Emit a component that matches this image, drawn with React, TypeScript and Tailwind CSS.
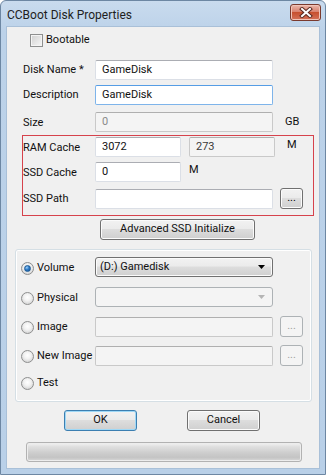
import React from "react";

const btnBg =
  "bg-[linear-gradient(to_bottom,#f2f2f2_0%,#ebebeb_45%,#dddddd_50%,#cfcfcf_100%)]";

function TextBox({
  value = "",
  w,
  disabled = false,
  focus = false,
  grayText = false,
}: {
  value?: string;
  w: string;
  disabled?: boolean;
  focus?: boolean;
  grayText?: boolean;
}) {
  const border = focus
    ? "border-[#7eb4ea] border-t-[#569de5]"
    : disabled
    ? "border-[#c9c9c9] border-t-[#afafaf]"
    : "border-[#dbdfe6] border-t-[#abadb3]";
  const bg = disabled ? "bg-[#f4f4f4]" : "bg-white";
  const color = grayText ? "text-[#8a8a8a]" : disabled ? "text-[#3a3a3a]" : "text-[#111]";
  return (
    <div className={`${w} h-[20px] shrink-0 rounded-[2px] border ${border} ${bg} ${color} flex items-center px-[6px]`}>
      {value}
    </div>
  );
}

function Button({
  label,
  w,
  h = "h-[21px]",
  primary = false,
}: {
  label: string;
  w: string;
  h?: string;
  primary?: boolean;
}) {
  return (
    <div
      className={`${w} ${h} shrink-0 rounded-[3px] border ${
        primary
          ? "border-[#3c7fb1] shadow-[inset_0_0_0_1px_#9fd8f6]"
          : "border-[#707070] shadow-[inset_0_0_0_1px_#fbfbfb]"
      } ${btnBg} flex items-center justify-center text-[#111]`}
    >
      {label}
    </div>
  );
}

function DotsButton({ disabled = false }: { disabled?: boolean }) {
  return (
    <div
      className={`w-[23px] h-[21px] shrink-0 rounded-[3px] border flex items-center justify-center pb-[3px] leading-none ${
        disabled
          ? "border-[#adb2b5] bg-[#f4f4f4] text-[#a0a0a0]"
          : `border-[#707070] ${btnBg} shadow-[inset_0_0_0_1px_#fbfbfb] text-black`
      }`}
    >
      ...
    </div>
  );
}

function Radio({ checked = false }: { checked?: boolean }) {
  return (
    <div className="w-[13px] h-[13px] shrink-0 rounded-full border border-[#8e8f8f] bg-[radial-gradient(circle_at_50%_40%,#ffffff_0%,#f2f2f2_40%,#c6c6c6_100%)] flex items-center justify-center">
      {checked && (
        <div className="w-[7px] h-[7px] rounded-full bg-[radial-gradient(circle_at_35%_30%,#9fd2fa_0%,#2f7cc9_45%,#134f8c_100%)] border border-[#1c5a95]" />
      )}
    </div>
  );
}

function Select({ value = "", disabled = false }: { value?: string; disabled?: boolean }) {
  return (
    <div
      className={`w-[178px] h-[20px] shrink-0 rounded-[3px] border flex items-center justify-between pl-[4px] pr-[7px] ${
        disabled
          ? "border-[#adb2b5] bg-[#f4f4f4]"
          : `border-[#707070] ${btnBg} shadow-[inset_0_0_0_1px_#fbfbfb]`
      }`}
    >
      <span>{value}</span>
      <svg width="7" height="4" viewBox="0 0 7 4">
        <path d="M0 0 H7 L3.5 4 Z" fill={disabled ? "#b5b5b5" : "#000"} />
      </svg>
    </div>
  );
}

export default function App() {
  return (
    <div className="w-[326px] h-[475px] bg-white font-['Roboto',sans-serif] text-[11px] text-[#111]">
      <div className="w-[326px] h-[475px] rounded-t-[6px] border border-[#6d87a3] bg-[linear-gradient(to_bottom,#c9dbee_0%,#bcd2e9_30px,#b9d0e8_100%)] flex flex-col">
        {/* title bar */}
        <div className="h-[26px] shrink-0 flex items-center justify-between pl-[6px] pr-[4px]">
          <span className="text-[12px] text-[#1e1e1e] pt-[1px]">CCBoot Disk Properties</span>
          <div className="w-[31px] h-[17px] -mt-[3px] rounded-[3px] border border-[#7a3a2e] bg-[linear-gradient(to_bottom,#eab7ab_0%,#d9826f_45%,#c7502f_50%,#d4725a_100%)] shadow-[inset_0_0_0_1px_#f0c4b8] flex items-center justify-center">
            <svg width="14" height="11" viewBox="0 0 14 11">
              <path d="M3 2 L11 9 M11 2 L3 9" stroke="#5a2a22" strokeWidth="4" strokeLinecap="square" />
              <path d="M3 2 L11 9 M11 2 L3 9" stroke="#ffffff" strokeWidth="2" strokeLinecap="square" />
            </svg>
          </div>
        </div>

        {/* client area */}
        <div className="ml-[6px] w-[312px] h-[441px] bg-[#f0f0f0] shadow-[0_0_0_1px_#a9c0d8] flex flex-col">
          {/* Bootable */}
          <div className="mt-[7px] ml-[23px] h-[13px] flex items-center gap-[3px]">
            <div className="w-[13px] h-[13px] border border-[#8e8f8f] bg-[linear-gradient(to_bottom_right,#d0d0d0,#f7f7f7)] shadow-[inset_0_0_0_1px_#f4f4f4]" />
            <span>Bootable</span>
          </div>

          {/* Disk Name */}
          <div className="mt-[13px] ml-[16px] flex items-center">
            <span className="w-[72px] shrink-0">Disk Name *</span>
            <TextBox value="GameDisk" w="w-[178px]" />
          </div>

          {/* Description */}
          <div className="mt-[5px] ml-[16px] flex items-center">
            <span className="w-[72px] shrink-0">Description</span>
            <TextBox value="GameDisk" w="w-[178px]" focus />
          </div>

          {/* Size */}
          <div className="mt-[7px] ml-[16px] flex items-center">
            <span className="w-[72px] shrink-0 pt-[2px]">Size</span>
            <TextBox value="0" w="w-[178px]" disabled grayText />
            <span className="ml-[12px]">GB</span>
          </div>

          {/* SSD cache box */}
          <div className="mt-[3px] ml-[15px] w-[292px] border border-[#d6424c] pt-[1px] pb-[6px]">
            <div className="flex items-center">
              <span className="w-[72px] shrink-0 pt-[2px]">RAM Cache</span>
              <TextBox value="3072" w="w-[86px]" />
              <div className="ml-[8px]">
                <TextBox value="273" w="w-[86px]" disabled />
              </div>
              <span className="ml-[12px] -mt-[4px]">M</span>
            </div>
            <div className="mt-[5px] flex items-center">
              <span className="w-[72px] shrink-0 pt-[2px]">SSD Cache</span>
              <TextBox value="0" w="w-[86px]" />
              <span className="ml-[8px] -mt-[4px]">M</span>
            </div>
            <div className="mt-[6px] flex items-center">
              <span className="w-[72px] shrink-0 pt-[2px]">SSD Path</span>
              <TextBox w="w-[178px]" />
              <div className="ml-[7px]">
                <DotsButton />
              </div>
            </div>
          </div>

          {/* Advanced */}
          <div className="mt-[3px] ml-[93px]">
            <Button label="Advanced SSD Initialize" w="w-[155px]" />
          </div>

          {/* group box */}
          <div className="mt-[9px] ml-[8px] w-[297px] h-[153px] rounded-[3px] border border-[#d5dfe5] shadow-[inset_0_0_0_1px_#ffffff] pt-[7px] pl-[5px]">
            <div className="flex items-center">
              <div className="w-[74px] shrink-0 flex items-center gap-[3px] pt-[2px]">
                <Radio checked />
                <span>Volume</span>
              </div>
              <Select value="(D:) Gamedisk" />
            </div>
            <div className="mt-[10px] flex items-center">
              <div className="w-[74px] shrink-0 flex items-center gap-[3px] pt-[2px]">
                <Radio />
                <span>Physical</span>
              </div>
              <Select disabled />
            </div>
            <div className="mt-[9px] flex items-center">
              <div className="w-[74px] shrink-0 flex items-center gap-[3px] pt-[2px]">
                <Radio />
                <span>Image</span>
              </div>
              <TextBox w="w-[178px]" disabled />
              <div className="ml-[7px]">
                <DotsButton disabled />
              </div>
            </div>
            <div className="mt-[8px] flex items-center">
              <div className="w-[74px] shrink-0 flex items-center gap-[3px] pt-[2px]">
                <Radio />
                <span className="whitespace-nowrap">New Image</span>
              </div>
              <TextBox w="w-[178px]" disabled />
              <div className="ml-[7px]">
                <DotsButton disabled />
              </div>
            </div>
            <div className="mt-[7px] h-[20px] flex items-center gap-[3px]">
              <Radio />
              <span>Test</span>
            </div>
          </div>

          {/* OK / Cancel */}
          <div className="mt-[8px] ml-[57px] flex items-center gap-[50px]">
            <Button label="OK" w="w-[73px]" primary />
            <Button label="Cancel" w="w-[73px]" />
          </div>

          {/* progress */}
          <div className="mt-[11px] ml-[19px] w-[276px] h-[20px] rounded-[3px] border border-[#b2b2b2] bg-[linear-gradient(to_bottom,#f3f3f3_0%,#e0e0e0_20%,#cdcdcd_55%,#c4c4c4_80%,#d8d8d8_100%)] shadow-[inset_0_0_0_1px_#ededed]" />
        </div>
      </div>
    </div>
  );
}
